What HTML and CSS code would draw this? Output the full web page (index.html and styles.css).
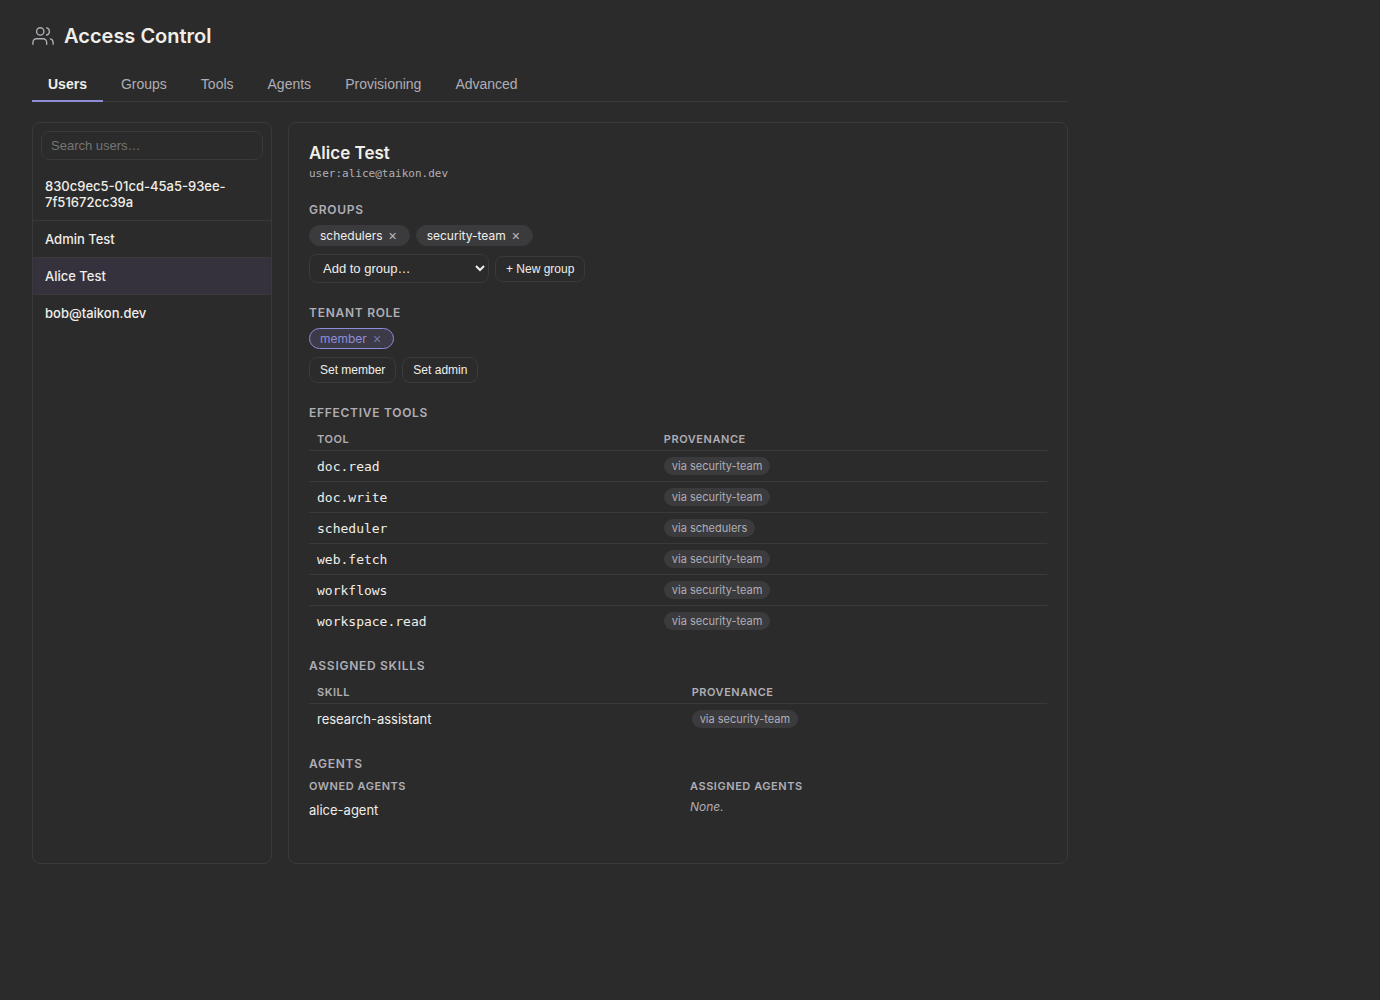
FILE: index.html
```html
<!DOCTYPE html>
<html lang="en">
<head>
  <meta charset="UTF-8" />
  <meta name="viewport" content="width=device-width, initial-scale=1.0"/>
  <title>Access Control</title>
  <link rel="stylesheet" href="styles.css">
</head>
<body>
  <main class="page">
    <header class="page-header">
      <svg class="page-icon" viewBox="0 0 24 24" aria-hidden="true">
        <path d="M16 21v-2a4 4 0 0 0-4-4H5a4 4 0 0 0-4 4v2"/>
        <circle cx="9" cy="7" r="4"/>
        <path d="M23 21v-2a4 4 0 0 0-3-3.87"/>
        <path d="M16 3.13a4 4 0 0 1 0 7.75"/>
      </svg>
      <h1>Access Control</h1>
    </header>

    <nav class="tabs" role="tablist">
      <button class="tab active" role="tab" aria-selected="true">Users</button>
      <button class="tab" role="tab">Groups</button>
      <button class="tab" role="tab">Tools</button>
      <button class="tab" role="tab">Agents</button>
      <button class="tab" role="tab">Provisioning</button>
      <button class="tab" role="tab">Advanced</button>
    </nav>

    <div class="layout">
      <aside class="panel">
        <div class="search">
          <input type="search" placeholder="Search users…" aria-label="Search users" />
        </div>
        <ul class="user-list">
          <li><a href="#">830c9ec5-01cd-45a5-93ee-7f51672cc39a</a></li>
          <li><a href="#">Admin Test</a></li>
          <li><a href="#" class="selected">Alice Test</a></li>
          <li><a href="#">bob@taikon.dev</a></li>
        </ul>
      </aside>

      <section class="panel detail">
        <h2>Alice Test</h2>
        <div class="subject">user:alice@taikon.dev</div>

        <div class="section">
          <h3>Groups</h3>
          <div class="chips">
            <span class="chip">schedulers <button class="chip-x" aria-label="Remove schedulers">×</button></span>
            <span class="chip">security-team <button class="chip-x" aria-label="Remove security-team">×</button></span>
          </div>
          <div class="actions">
            <select aria-label="Add to group">
              <option>Add to group…</option>
            </select>
            <button class="btn">+ New group</button>
          </div>
        </div>

        <div class="section">
          <h3>Tenant role</h3>
          <div class="chips">
            <span class="chip role">member <button class="chip-x" aria-label="Remove member">×</button></span>
          </div>
          <div class="actions">
            <button class="btn">Set member</button>
            <button class="btn">Set admin</button>
          </div>
        </div>

        <div class="section">
          <h3>Effective tools</h3>
          <table class="tools">
            <thead>
              <tr><th>Tool</th><th>Provenance</th></tr>
            </thead>
            <tbody>
              <tr><td class="mono">doc.read</td><td><span class="via">via security-team</span></td></tr>
              <tr><td class="mono">doc.write</td><td><span class="via">via security-team</span></td></tr>
              <tr><td class="mono">scheduler</td><td><span class="via">via schedulers</span></td></tr>
              <tr><td class="mono">web.fetch</td><td><span class="via">via security-team</span></td></tr>
              <tr><td class="mono">workflows</td><td><span class="via">via security-team</span></td></tr>
              <tr><td class="mono">workspace.read</td><td><span class="via">via security-team</span></td></tr>
            </tbody>
          </table>
        </div>

        <div class="section">
          <h3>Assigned skills</h3>
          <table>
            <thead>
              <tr><th>Skill</th><th>Provenance</th></tr>
            </thead>
            <tbody>
              <tr><td>research-assistant</td><td><span class="via">via security-team</span></td></tr>
            </tbody>
          </table>
        </div>

        <div class="section">
          <h3>Agents</h3>
          <div class="agents">
            <div>
              <h4>Owned agents</h4>
              <ul class="agent-list"><li>alice-agent</li></ul>
            </div>
            <div>
              <h4>Assigned agents</h4>
              <p class="empty">None.</p>
            </div>
          </div>
        </div>
      </section>
    </div>
  </main>
</body>
</html>
```
FILE: styles.css
```css
:root {
  --bg: #2b2b2b;
  --border: #3a3a3c;
  --chip: #3b3b3e;
  --text: #f0eee9;
  --muted: #b0aeb5;
  --accent: #8f8cd9;
}

* { box-sizing: border-box; }
body { margin: 0; background: var(--bg); color: var(--text); font-family: Inter, sans-serif; font-size: 13px; }
h1, h2, h3, h4, p, ul { margin: 0; padding: 0; }
ul { list-style: none; }
button, input, select { font-family: "Liberation Sans", Arial, sans-serif; color: var(--text); }
button { cursor: pointer; }

.page { max-width: 1100px; padding: 24px 32px; }
.page-header { display: flex; align-items: center; gap: 10px; margin-bottom: 20px; }
.page-header h1 { font-size: 20px; line-height: 24px; font-weight: 600; }
.page-icon { width: 22px; height: 22px; fill: none; stroke: var(--muted); stroke-width: 1.5; stroke-linecap: round; stroke-linejoin: round; }

.tabs { display: flex; gap: 2px; border-bottom: 1px solid var(--border); margin-bottom: 20px; }
.tab { background: none; border: 0; border-bottom: 2px solid transparent; margin-bottom: -1px; padding: 8px 16px; font-size: 14px; line-height: 16px; color: var(--muted); }
.tab.active { color: var(--text); font-weight: 600; border-bottom-color: var(--accent); }

.layout { display: grid; grid-template-columns: 240px 1fr; gap: 16px; }
.panel { border: 1px solid var(--border); border-radius: 8px; overflow: hidden; }
.search { padding: 8px; }
.search input { display: block; width: 100%; padding: 6px 9px; border: 1px solid var(--border); border-radius: 8px; background: var(--bg); font-size: 13px; line-height: 15px; }
.search input::placeholder { color: #757575; }

.user-list li { border-bottom: 1px solid var(--border); }
.user-list li:last-child { border-bottom: 0; }
.user-list a { display: block; padding: 10px 12px; color: var(--text); text-decoration: none; font-weight: 500; line-height: 16px; }
.user-list a.selected { background: #35323d; }

.detail { padding: 20px; }
.detail h2 { font-size: 17px; line-height: 20px; font-weight: 600; }
.subject { margin: 4px 0 22px; font-family: "DejaVu Sans Mono", monospace; font-size: 11px; line-height: 13px; color: var(--muted); }
.section { margin-bottom: 22px; }
h3 { margin-bottom: 8px; font-size: 12px; line-height: 15px; font-weight: 600; letter-spacing: 0.06em; text-transform: uppercase; color: var(--muted); }

.chips { display: flex; flex-wrap: wrap; gap: 6px; margin-bottom: 8px; }
.chip { display: inline-flex; align-items: center; gap: 4px; padding: 2px 10px; border: 1px solid var(--chip); border-radius: 12px; background: var(--chip); font-size: 12px; line-height: 15px; }
.chip-x { border: 0; padding: 0 2px; background: none; color: inherit; font-size: 14px; line-height: 14px; opacity: 0.7; }
.chip.role { background: #3b3a46; border-color: var(--accent); color: var(--accent); }

.actions { display: flex; align-items: center; gap: 6px; }
.actions select { width: 180px; padding: 5px 9px; border: 1px solid var(--border); border-radius: 8px; background: var(--bg); font-size: 13px; }
.btn { padding: 5px 10px; border: 1px solid var(--border); border-radius: 8px; background: none; font-size: 12px; line-height: 14px; }

table { width: 100%; border-collapse: collapse; }
th { padding: 4px 8px; border-bottom: 1px solid var(--border); text-align: left; font-size: 11px; line-height: 14px; font-weight: 600; letter-spacing: 0.05em; text-transform: uppercase; color: var(--muted); }
td { padding: 6px 8px; border-bottom: 1px solid var(--border); line-height: 18px; }
tr:last-child td { border-bottom: 0; }
.tools th:first-child { width: 47%; }
.mono { padding: 7px 8px 5px; font-family: "DejaVu Sans Mono", monospace; }
.via { display: inline-block; margin-right: 4px; padding: 2px 8px; border-radius: 9px; background: var(--chip); color: var(--muted); font-size: 11px; line-height: 14px; vertical-align: top; }

.agents { display: grid; grid-template-columns: 1fr 1fr; gap: 24px; }
h4 { margin-bottom: 6px; font-size: 11px; line-height: 14px; font-weight: 600; letter-spacing: 0.05em; text-transform: uppercase; color: var(--muted); }
.agent-list li { padding: 3px 0; line-height: 16px; }
.empty { font-size: 12px; line-height: 15px; font-style: italic; color: var(--muted); }
```
